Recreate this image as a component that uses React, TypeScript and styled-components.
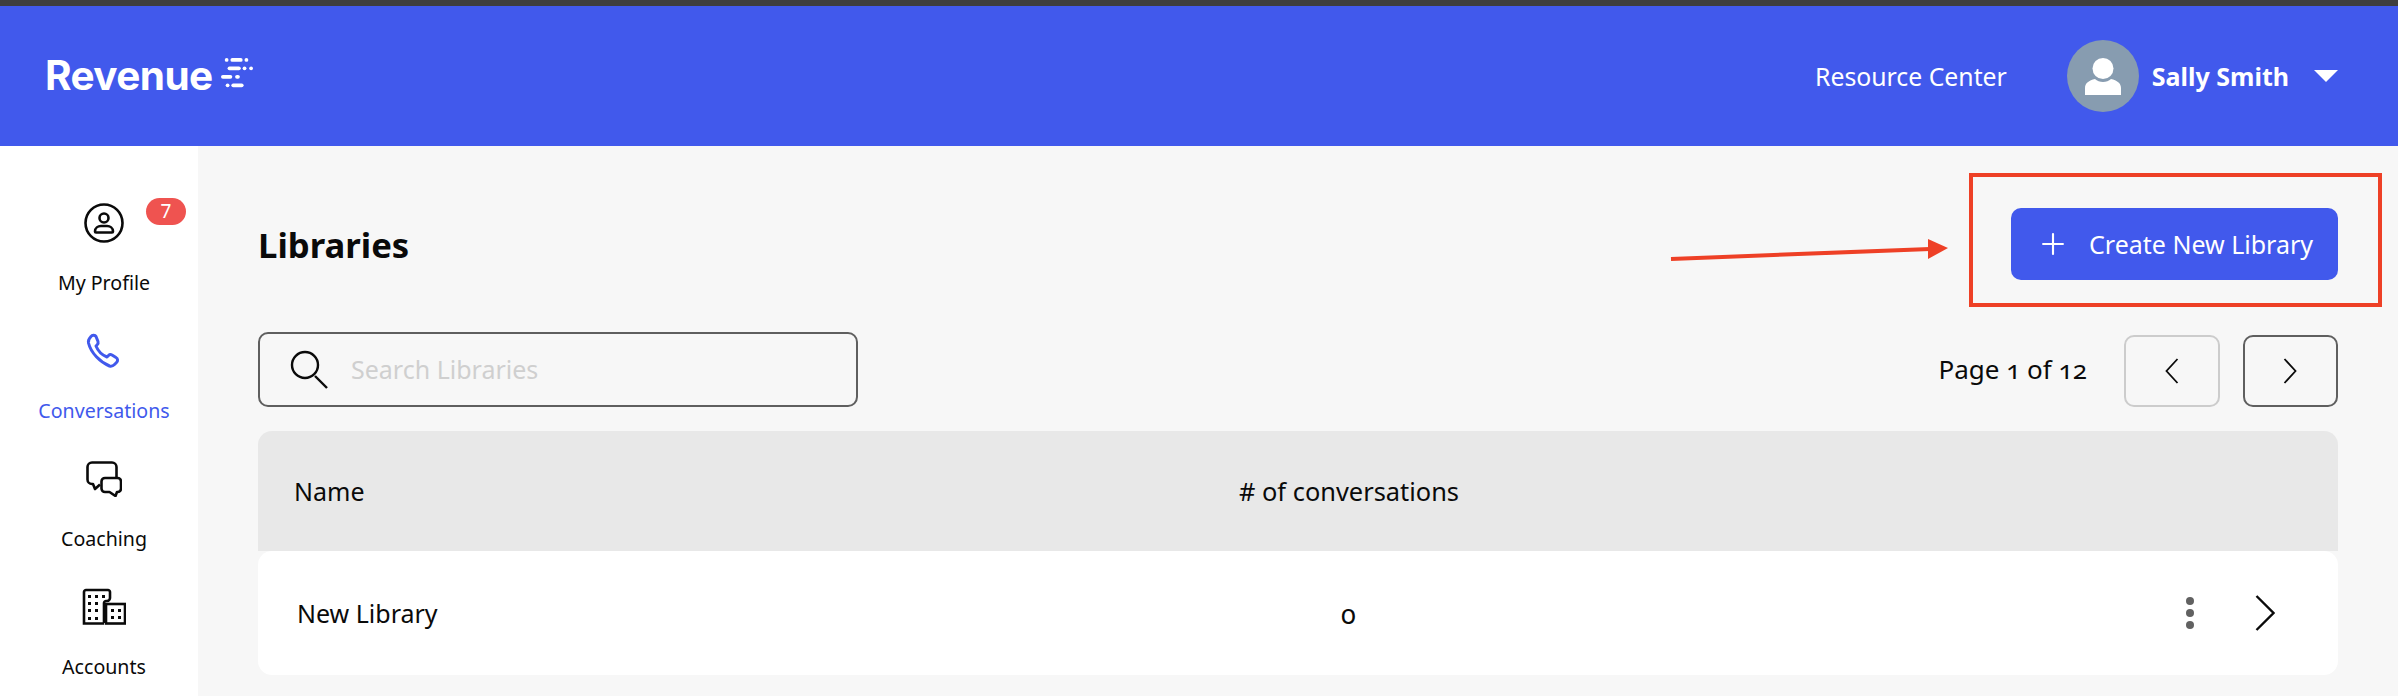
import React from "react";
import styled, { createGlobalStyle } from "styled-components";
import { Plus } from "lucide-react";

const Global = createGlobalStyle`
  html, body { margin: 0; padding: 0; height: 100%; overflow: hidden; background: #f7f7f7; }
  body { font-family: "Noto Sans", "Open Sans", sans-serif; color: #0a0a0a; }
`;

const Page = styled.div`
  position: relative;
  width: 2398px;
  height: 696px;
  overflow: hidden;
  border-top: 6px solid #3e3e3e;
  box-sizing: border-box;
  display: flex;
  flex-direction: column;
`;

const Header = styled.header`
  flex: 0 0 140px;
  background: #4159ec;
  color: #fff;
  display: flex;
  align-items: center;
  padding: 0 60px 0 45px;
`;

const Logo = styled.div`
  display: flex;
  align-items: center;
  gap: 8px;
  font-family: "Inter", sans-serif;
  font-weight: 700;
  font-size: 40.5px;
  letter-spacing: -0.6px;
  line-height: 48px;
  flex: 1;
`;

const ResourceLink = styled.a`
  font-size: 24.8px;
  margin-right: 60px;
`;

const Avatar = styled.div`
  width: 72px;
  height: 72px;
  border-radius: 50%;
  background: #879cb0;
  display: flex;
  align-items: center;
  justify-content: center;
  margin-right: 13px;
`;

const UserName = styled.span`
  font-size: 25px;
  font-weight: 700;
  margin-right: 25px;
`;

const Caret = styled.span`
  width: 0;
  height: 0;
  border-left: 12px solid transparent;
  border-right: 12px solid transparent;
  border-top: 12px solid #fff;
`;

const Body = styled.div`
  flex: 1;
  display: flex;
  min-height: 0;
`;

const Sidebar = styled.nav`
  flex: 0 0 198px;
  background: #fff;
  display: flex;
  flex-direction: column;
  padding: 55px 0 0 10px;
  box-sizing: border-box;
`;

const NavItem = styled.div<{ $active?: boolean }>`
  position: relative;
  flex: 0 0 128px;
  display: flex;
  flex-direction: column;
  align-items: center;
  color: ${(p) => (p.$active ? "#4159ec" : "#0a0a0a")};
  font-size: 19.6px;
`;

const NavIcon = styled.div`
  height: 44px;
  display: flex;
  align-items: center;
  justify-content: center;
  margin-bottom: 24px;
`;

const Badge = styled.span`
  position: absolute;
  left: 136px;
  top: -3px;
  width: 40px;
  height: 27px;
  border-radius: 14px;
  background: #ef5350;
  color: #fff;
  font-size: 19px;
  line-height: 27px;
  text-align: center;
`;

const Main = styled.main`
  flex: 1;
  padding: 62px 60px 0;
  display: flex;
  flex-direction: column;
  min-width: 0;
`;

const TitleRow = styled.div`
  display: flex;
  align-items: center;
  justify-content: space-between;
  flex: 0 0 72px;
`;

const Title = styled.h1`
  margin: 0;
  font-size: 34.7px;
  font-weight: 700;
`;

const CreateButton = styled.button`
  width: 327px;
  height: 72px;
  border: 0;
  border-radius: 10px;
  background: #4159ec;
  color: #fff;
  font: inherit;
  font-size: 25px;
  display: flex;
  align-items: center;
  padding: 0 0 0 25px;
  gap: 19px;
`;

const Toolbar = styled.div`
  margin-top: 52px;
  display: flex;
  align-items: center;
  justify-content: space-between;
`;

const SearchBox = styled.div`
  width: 600px;
  height: 75px;
  box-sizing: border-box;
  border: 2px solid #5f5f5f;
  border-radius: 10px;
  display: flex;
  align-items: center;
  padding-left: 30px;
  gap: 23px;
`;

const SearchText = styled.span`
  font-size: 25px;
  color: #cfcfcf;
  position: relative;
  top: -1px;
`;

const Pager = styled.div`
  display: flex;
  align-items: center;
  margin-top: 3px;
`;

const PageLabel = styled.span`
  font-size: 26px;
  font-variant-numeric: oldstyle-nums;
  margin-right: 37px;
  position: relative;
  top: -2px;
`;

const PageButton = styled.button<{ $disabled?: boolean }>`
  width: 95.5px;
  height: 72px;
  box-sizing: border-box;
  background: transparent;
  border: 2px solid ${(p) => (p.$disabled ? "#cccccc" : "#5f5f5f")};
  border-radius: 10px;
  display: flex;
  align-items: center;
  justify-content: center;
  margin-left: 23px;
  padding: 0;
  &:first-of-type { margin-left: 0; }
`;

const Table = styled.div`
  margin-top: 24px;
`;

const HeadRow = styled.div`
  height: 120px;
  background: #e8e8e8;
  border-radius: 14px 14px 0 0;
  display: grid;
  grid-template-columns: 945px 1fr;
  align-items: center;
  padding-left: 36px;
  font-size: 25px;
`;

const ConversationsHead = styled.span`
  font-size: 25.4px;
`;

const DataRow = styled.div`
  height: 124px;
  background: #fff;
  border-radius: 14px;
  display: grid;
  grid-template-columns: 1044px 1fr auto;
  align-items: center;
  padding: 0 63px 0 39px;
  font-size: 25px;
`;

const Count = styled.span`
  font-size: 27px;
  font-variant-numeric: oldstyle-nums;
`;

const RowActions = styled.div`
  display: flex;
  align-items: center;
  gap: 61px;
`;

const Kebab = styled.div`
  display: flex;
  flex-direction: column;
  gap: 4px;
`;

const Dot = styled.span`
  width: 8px;
  height: 8px;
  border-radius: 50%;
  background: #616161;
`;

const CalloutBox = styled.div`
  position: absolute;
  left: 1969px;
  top: 167px;
  width: 413px;
  height: 134px;
  box-sizing: border-box;
  border: 4px solid #ee4026;
`;

const CalloutArrow = styled.svg`
  position: absolute;
  left: 1660px;
  top: 225px;
`;

const LogoMark = () => (
  <svg width="32" height="32" viewBox="0 0 34 34" fill="#fff" style={{ marginTop: -4 }}>
    <rect x="4" y="0" width="4" height="4" rx="2" />
    <rect x="10" y="0" width="13" height="4" rx="2" />
    <rect x="25" y="0" width="4" height="4" rx="2" />
    <rect x="7" y="9" width="14" height="4" rx="2" />
    <rect x="23" y="9" width="4" height="4" rx="2" />
    <rect x="30" y="9" width="4" height="4" rx="2" />
    <rect x="0" y="18" width="12" height="4" rx="2" />
    <rect x="15" y="18" width="5" height="4" rx="2" />
    <rect x="5" y="27" width="4" height="4" rx="2" />
    <rect x="11" y="27" width="13" height="4" rx="2" />
  </svg>
);

const UserGlyph = () => (
  <svg width="36" height="37" viewBox="0 0 36 37" fill="#fff">
    <ellipse cx="18" cy="10.5" rx="10.5" ry="10.5" />
    <path d="M0 37v-7c0-5 4-7.500 10-9 2 2 5 3 8 3s6-1 8-3c6 1.500 10 4 10 9v7z" />
  </svg>
);

const ProfileIcon = () => (
  <svg width="42" height="42" viewBox="0 0 42 42" fill="none" stroke="#0a0a0a" strokeWidth="2.6">
    <circle cx="21" cy="21" r="18.500" />
    <circle cx="21" cy="16" r="4.500" />
    <path d="M12 29.500c0-3.500 3-5.500 6-5.500h6c3 0 6 2 6 5.500 0 .6-.4 1-1 1H13c-.6 0-1-.4-1-1z" />
  </svg>
);

const PhoneIcon = () => (
  <svg width="36" height="36" viewBox="0 0 36 36" fill="none" stroke="#4159ec" strokeWidth="3" strokeLinejoin="round">
    <path d="M5 3.500c1-1.500 4-2 5 0l2 5c.5 1.500 0 2.500-1 3.500l-1 1c2 5 6 9 11 11l1.500-1.500c1-1 2-1.300 3.500-.5l4 2.500c2 1 2 3.500.5 5l-2 2c-1.500 1.500-3 2-5 1.500C14 29 5 20 2.500 10c-.5-2.500 1-5 2.500-6.500z" />
  </svg>
);

const CoachingIcon = () => (
  <svg width="36" height="36" viewBox="0 0 36 36" fill="none" stroke="#0a0a0a" strokeWidth="2.6" strokeLinejoin="round">
    <path d="M14 23.500L9 28l-2-5H6c-2.500 0-4.500-2-4.500-4.500V6C1.500 3.500 3.500 1.500 6 1.500h20c2.500 0 4.500 2 4.500 4.500v10" />
    <path d="M19 17h12.500c2 0 3.500 1.500 3.500 3.500v7c0 2-1.500 3.500-3.500 3.500H31l-1.500 4-6-4H19c-2 0-3.500-1.500-3.500-3.500v-7c0-2 1.500-3.500 3.500-3.500z" />
  </svg>
);

const AccountsIcon = () => (
  <svg width="44" height="38" viewBox="0 0 44 38" fill="none" stroke="#0a0a0a" strokeWidth="2.6">
    <path d="M22 35.500H2V4c0-1 1-2 2-2h22c1 0 2 1 2 2v6c0 1-1 3-3 3h-1c-1 0-2 1-2 2v20" />
    <rect x="24" y="16" width="19" height="19.500" />
    <g fill="#0a0a0a" stroke="none">
      <rect x="6" y="7" width="3" height="3" /><rect x="13" y="7" width="3" height="3" /><rect x="20" y="7" width="3" height="3" />
      <rect x="6" y="14" width="3" height="3" /><rect x="13" y="14" width="3" height="3" />
      <rect x="6" y="21" width="3" height="3" /><rect x="13" y="21" width="3" height="3" />
      <rect x="6" y="29" width="3" height="3" /><rect x="13" y="29" width="3" height="3" />
      <rect x="29" y="21" width="3" height="3" /><rect x="36" y="21" width="3" height="3" />
      <rect x="29" y="28" width="3" height="3" /><rect x="36" y="28" width="3" height="3" />
    </g>
  </svg>
);

const SearchGlyph = () => (
  <svg width="38" height="40" viewBox="0 0 38 40" fill="none" stroke="#0a0a0a" strokeWidth="2.400">
    <circle cx="15" cy="15" r="13" />
    <path d="M25 26l12 12" />
  </svg>
);

const PagerBack = () => (
  <svg width="14" height="26" viewBox="0 0 14 26" fill="none" stroke="#0a0a0a" strokeWidth="1.800">
    <path d="M12.500 1L1.500 13l11 12" />
  </svg>
);

const PagerNext = () => (
  <svg width="14" height="26" viewBox="0 0 14 26" fill="none" stroke="#0a0a0a" strokeWidth="1.800">
    <path d="M1.500 1l11 12-11 12" />
  </svg>
);

const RowChevron = () => (
  <svg width="20" height="36" viewBox="0 0 20 36" fill="none" stroke="#0a0a0a" strokeWidth="2.400">
    <path d="M1.500 1l17 17-17 17" />
  </svg>
);

export default function App() {
  return (
    <Page>
      <Global />
      <Header>
        <Logo>
          Revenue
          <LogoMark />
        </Logo>
        <ResourceLink>Resource Center</ResourceLink>
        <Avatar>
          <UserGlyph />
        </Avatar>
        <UserName>Sally Smith</UserName>
        <Caret />
      </Header>
      <Body>
        <Sidebar>
          <NavItem>
            <NavIcon><ProfileIcon /></NavIcon>
            My Profile
            <Badge>7</Badge>
          </NavItem>
          <NavItem $active>
            <NavIcon><PhoneIcon /></NavIcon>
            Conversations
          </NavItem>
          <NavItem>
            <NavIcon><CoachingIcon /></NavIcon>
            Coaching
          </NavItem>
          <NavItem>
            <NavIcon><AccountsIcon /></NavIcon>
            Accounts
          </NavItem>
        </Sidebar>
        <Main>
          <TitleRow>
            <Title>Libraries</Title>
            <CreateButton>
              <Plus size={34} strokeWidth={1.5} />
              Create New Library
            </CreateButton>
          </TitleRow>
          <Toolbar>
            <SearchBox>
              <SearchGlyph />
              <SearchText>Search Libraries</SearchText>
            </SearchBox>
            <Pager>
              <PageLabel>Page 1 of 12</PageLabel>
              <PageButton $disabled><PagerBack /></PageButton>
              <PageButton><PagerNext /></PageButton>
            </Pager>
          </Toolbar>
          <Table>
            <HeadRow>
              <span>Name</span>
              <ConversationsHead># of conversations</ConversationsHead>
            </HeadRow>
            <DataRow>
              <span>New Library</span>
              <Count>0</Count>
              <RowActions>
                <Kebab><Dot /><Dot /><Dot /></Kebab>
                <RowChevron />
              </RowActions>
            </DataRow>
          </Table>
        </Main>
      </Body>
      <CalloutBox />
      <CalloutArrow width="300" height="40" viewBox="0 0 300 40">
        <path d="M11 28L270 18" stroke="#ee4026" strokeWidth="4" />
        <path d="M268 8L288 17L268 28z" fill="#ee4026" />
      </CalloutArrow>
    </Page>
  );
}
